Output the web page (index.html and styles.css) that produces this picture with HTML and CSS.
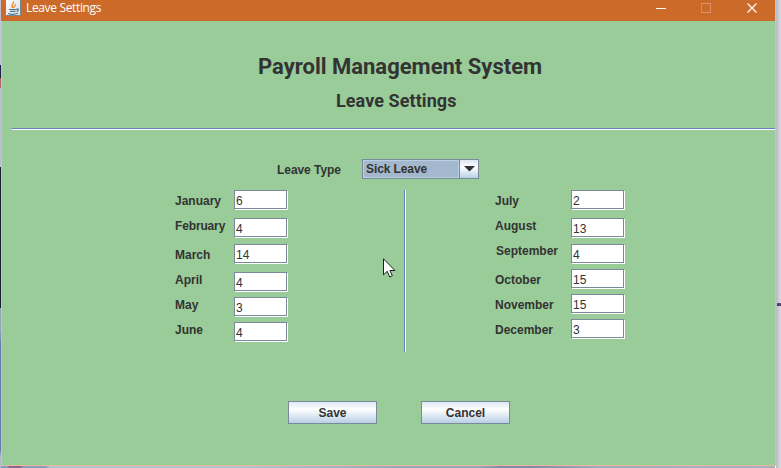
FILE: index.html
```
<!DOCTYPE html>
<html lang="en">
<head>
<meta charset="utf-8">
<title>Leave Settings</title>
<link rel="stylesheet" href="styles.css">
</head>
<body>
<div class="window">
  <header class="titlebar">
    <svg class="app-icon" width="16" height="16" viewBox="0 0 16 16">
      <defs><linearGradient id="tile" x1="0" y1="0" x2="1" y2="1"><stop offset="0" stop-color="#fff"/><stop offset="1" stop-color="#d9dee2"/></linearGradient></defs>
      <rect x=".5" y="-1.5" width="15" height="17" rx="1" fill="url(#tile)" stroke="#718794"/>
      <path d="M8 8C4.500 5 9.500 4 8.500 1.500M9 8c-1-2 2-2 1.500-4" fill="none" stroke="#ee8a2e" stroke-width="1.300"/>
      <path d="M4 9.500h7.500M5 11.300h5.500M11.500 9c2.500-.5 2.500 2 0 2.300M3 13.500c3 1 7 1 10-.3" fill="none" stroke="#4f768f" stroke-width="1.200"/>
    </svg>
    <span class="title">Leave Settings</span>
    <svg class="controls" width="104" height="16" viewBox="0 0 104 16">
      <path d="M0 8.500h10" stroke="#fff"/>
      <rect x="45.500" y="3.500" width="9" height="9" fill="none" stroke="#dc9065"/>
      <path d="M91.500 3.500l9 9M100.500 3.500l-9 9" stroke="#fff" stroke-width="1.200"/>
    </svg>
  </header>
  <main>
    <h1>Payroll Management System</h1>
    <h2>Leave Settings</h2>
    <div class="rule"></div>
    <div class="type-row">
      <span class="type-label">Leave Type</span>
      <div class="combo"><span class="combo-value">Sick Leave</span><span class="combo-arrow"><svg width="11" height="6" viewBox="0 0 11 6"><path d="M0 0h11L5.500 5.500z" fill="#333"/></svg></span></div>
    </div>
    <div class="months">
      <div class="labels first">
        <span>January</span><span class="snug">February</span><span class="wide-gap">March</span><span>April</span><span>May</span><span>June</span>
      </div>
      <div class="fields">
        <span>6</span><span class="gap-8">4</span><span class="gap-6">14</span><span class="gap-8">4</span><span>3</span><span>4</span>
      </div>
      <div class="divider"></div>
      <div class="labels second">
        <span>July</span><span>August</span><span class="indent">September</span><span class="wide-gap">October</span><span>November</span><span>December</span>
      </div>
      <div class="fields">
        <span>2</span><span class="gap-8">13</span><span class="gap-6">4</span><span>15</span><span>15</span><span>3</span>
      </div>
    </div>
    <div class="actions"><button>Save</button><button>Cancel</button></div>
  </main>
</div>
<svg class="cursor" width="13" height="21" viewBox="0 0 13 21"><path d="M.5.800v16l3.700-3.500 2.500 5.700 2.600-1.200-2.400-5.300h5z" fill="#fff" stroke="#17231c"/></svg>
</body>
</html>
```
FILE: styles.css
```
* { box-sizing: border-box; }
body {
  margin: 0;
  width: 781px;
  height: 468px;
  overflow: hidden;
  position: relative;
  padding-left: 1px;
  font: bold 12px/16px "Liberation Sans", sans-serif;
  color: #333;
  background:
    linear-gradient(#bcc2d3 0 65px, #1c1f4e 65px 78px, #ad6670 78px 88px, #b8bdd1 88px 167px, #191b3c 167px 308px, #8fa5c0 308px 330px, #6379ac 345px 450px, #b2b8ce 456px) 0 0 / 1px 468px no-repeat,
    linear-gradient(90deg, #8a9cbb 0 8px, #93648f 9px 21px, #8b9ebb 23px 45px, #b7c1ca 50px 240px, #9da6b9 400px 480px, #8288a4 500px 530px, #a5aabd 600px, #abaebd) 0 466px / 775px 2px no-repeat,
    linear-gradient(#55547d, #3c3c66) 777px 303px / 4px 3px no-repeat,
    linear-gradient(90deg, #b9bac3, #d9dce1) 776px 0 / 5px 468px no-repeat;
}
.window {
  width: 775px;
  height: 466px;
  border: solid #e3bd99;
  border-width: 0 1px 1px;
  background: #9c9;
}
.titlebar {
  height: 21px;
  margin-left: -1px;
  padding-left: 4px;
  display: flex;
  align-items: flex-start;
  background: #cc6a29;
}
.title {
  margin-left: 5px;
  font: 12px/16px "Open Sans", sans-serif;
  letter-spacing: -.35px;
  color: #fff;
}
.controls { margin: 0 15px 0 auto; }
main { display: flex; flex-direction: column; }
h1, h2 {
  margin: 0;
  font-family: Roboto, sans-serif;
  font-weight: 700;
  white-space: nowrap;
}
h1 { margin: 32px 0 0 256px; font-size: 22px; line-height: 28px; }
h2 { margin: 9px 0 0 334px; font-size: 18px; line-height: 22px; letter-spacing: .07px; }
.rule {
  margin: 16px 0 0 10px;
  height: 2px;
  background: #fff;
  border-top: 1px solid #6382bf;
}
.type-row {
  margin: 29px 0 0 275px;
  height: 20px;
  display: flex;
}
.type-label { width: 85px; line-height: 22px; letter-spacing: -.06px; }
.combo {
  width: 117px;
  height: 20px;
  display: flex;
  border: 1px solid #7a8a99;
}
.combo-value {
  flex: 1;
  padding-left: 2px;
  line-height: 16px;
  letter-spacing: -.1px;
  border: 1px solid #b8cfe5;
  background: #a3b8cc;
}
.combo-arrow {
  width: 19px;
  display: grid;
  place-items: center;
  border-left: 1px solid #7a8a99;
  background: linear-gradient(#dde8f3, #fff 40%, #b8cfe5);
}
.months { margin: 11px 0 0 173px; display: flex; }
.labels {
  display: flex;
  flex-direction: column;
  gap: 9px;
  padding-top: 3px;
}
.first { width: 59px; }
.second { width: 76px; }
.snug { letter-spacing: -.15px; }
.wide-gap { margin-top: 4px; }
.indent { margin-left: 1px; }
.fields { width: 54px; }
.fields span {
  display: block;
  width: 53px;
  height: 19px;
  margin-top: 6px;
  padding-left: 1px;
  border: 1px solid #7a8a99;
  box-shadow: 1px 1px #fff;
  background: #fff;
  font-weight: 400;
  line-height: 20px;
}
.fields span:first-child { margin-top: 0; }
.fields .gap-8 { margin-top: 9px; }
.fields .gap-6 { margin-top: 7px; }
.divider {
  width: 2px;
  height: 162px;
  margin: 0 89px 0 116px;
  background: #fff;
  border-left: 1px solid #6382bf;
}
.actions { margin: 49px 0 0 286px; display: flex; gap: 44px; }
button {
  width: 89px;
  height: 23px;
  padding: 0;
  border: 1px solid #7a8a99;
  border-radius: 0;
  background: linear-gradient(#dde8f3, #fff 35%, #b8cfe5);
  font: inherit;
  color: #333;
}
.cursor { position: absolute; left: 383px; top: 258px; }
```
